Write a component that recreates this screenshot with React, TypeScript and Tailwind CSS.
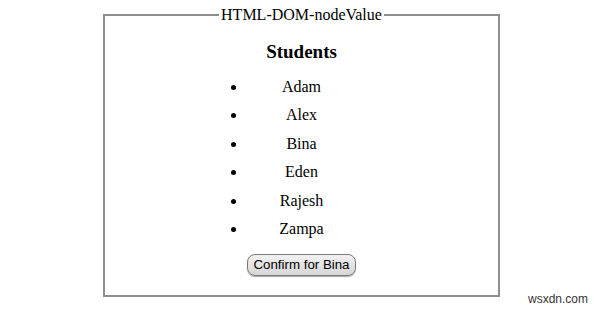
const students = ['Adam', 'Alex', 'Bina', 'Eden', 'Rajesh', 'Zampa'];

export default function App() {
  return (
    <div className="relative w-[600px] h-[313px] bg-white overflow-hidden font-['Liberation_Serif',serif] text-black">
      <div className="pt-[6px] pl-[103px]">
        <fieldset className="w-[397px] h-[291px] border-2 border-solid border-[#8e8e8e] px-0 pb-0">
          <legend className="mx-auto px-[2px] text-[16px] leading-[18px]">HTML-DOM-nodeValue</legend>
          <h3 className="mt-[17px] text-center text-[19px] font-bold leading-[22px]">Students</h3>
          <ul className="mx-auto mt-[10px] w-[110px] list-disc pl-0">
            {students.map((s) => (
              <li key={s} className="text-center text-[16px] leading-[28.4px]">
                {s}
              </li>
            ))}
          </ul>
          <div className="mt-[11px] flex justify-center">
            <button className="h-[22px] rounded-[8px] border border-[#7a7a7a] bg-gradient-to-b from-[#f2f2f2] to-[#d6d6d6] px-[5px] font-['Liberation_Sans',Arial,sans-serif] text-[13.3px] leading-[18px] text-black shadow-[0_1px_1px_rgba(0,0,0,0.35)]">
              Confirm for Bina
            </button>
          </div>
        </fieldset>
      </div>
      <span className="absolute left-[528px] top-[290px] font-['Liberation_Sans',Arial,sans-serif] text-[12px] text-[#333]">
        wsxdn.com
      </span>
    </div>
  );
}
